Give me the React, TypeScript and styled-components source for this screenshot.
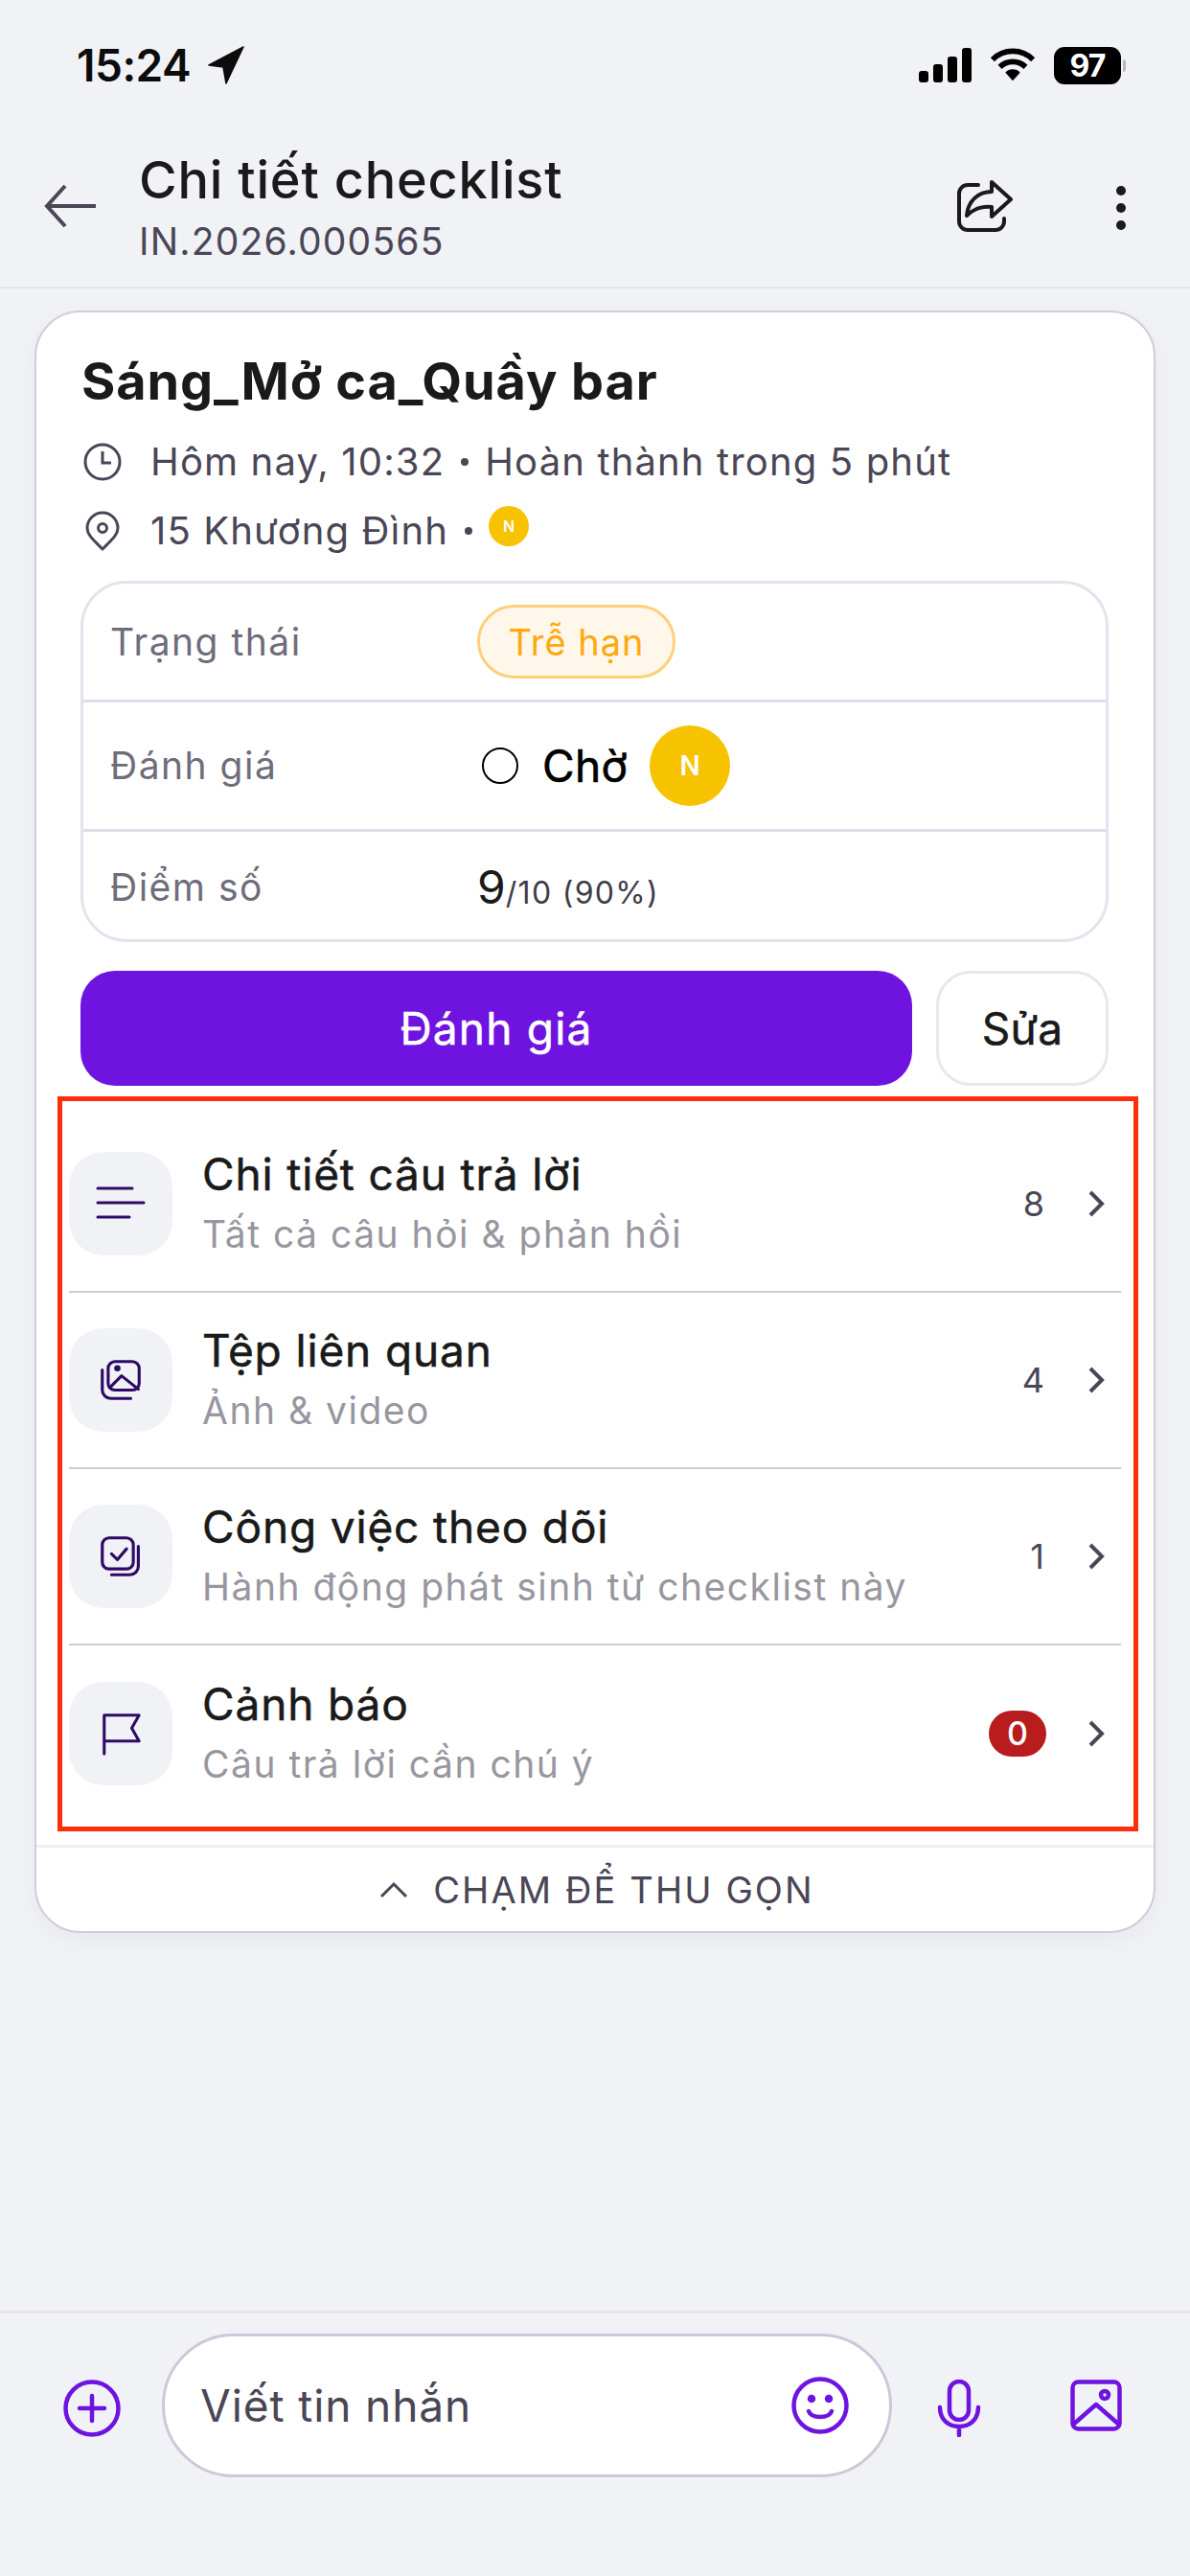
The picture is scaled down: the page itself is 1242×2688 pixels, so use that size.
import React from "react";
import styled, { createGlobalStyle } from "styled-components";

const Global = createGlobalStyle`
  html, body { margin: 0; padding: 0; background: #f1f2f6; }
  * { box-sizing: border-box; }
  body { font-family: Inter, "Noto Sans", sans-serif; -webkit-font-smoothing: antialiased; }
`;

const Page = styled.div`
  width: 1242px; height: 2688px; display: flex; flex-direction: column; background: #f1f2f6; overflow: hidden;
`;
const StatusBar = styled.div`
  height: 130px; flex: none; display: flex; justify-content: space-between; align-items: flex-start;
  padding: 46px 72px 0 80px;
`;
const StatusGroup = styled.div<{ $gap: number }>`
  display: flex; align-items: center; gap: ${p => p.$gap}px; height: 44px;
`;
const Time = styled.span`
  font: 600 46px/44px Inter, sans-serif; color: #0c0c0c; letter-spacing: -0.5px;
`;
const Battery = styled.div`
  width: 70px; height: 39px; border-radius: 11px; background: #000; color: #fff;
  font: 700 32px/39px Inter, sans-serif; text-align: center; position: relative; letter-spacing: -1px;
  &::after { content: ""; position: absolute; right: -5px; top: 13px; width: 3px; height: 13px; border-radius: 0 3px 3px 0; background: #b9b9b9; }
`;
const Header = styled.header`
  height: 171px; flex: none; display: flex; align-items: flex-start; padding: 0 66px 0 46px;
  border-bottom: 2px solid #e3e3ea;
`;
const BackBtn = styled.div`
  width: 99px; flex: none; padding-top: 62px;
`;
const HeaderText = styled.div`
  flex: 1; display: flex; flex-direction: column; padding-top: 25px;
`;
const HeaderTitle = styled.div`
  font: 500 54px/66px Inter, sans-serif; color: #1a1a1a; letter-spacing: 0.8px;
`;
const HeaderSub = styled.div`
  font: 400 39px/50px Inter, sans-serif; color: #4a4656; letter-spacing: 1.2px; margin-top: 6px;
`;
const HeaderActions = styled.div`
  display: flex; align-items: flex-start; gap: 107px; padding-top: 58px;
`;
const Card = styled.section`
  margin: 23px 36px 0; height: 1693px; flex: none; background: #fff; border: 2px solid #d3cadd; border-radius: 48px;
  box-shadow: 0 8px 24px rgba(30, 20, 60, 0.04); display: flex; flex-direction: column;
`;
const CardTop = styled.div`
  padding: 0 45px 0 48px; height: 817px; flex: none; display: flex; flex-direction: column;
`;
const CardTitle = styled.h1`
  margin: 38px 0 0 -1px; font: 700 54px/68px Inter, sans-serif; color: #1a1a1a; letter-spacing: 0.9px;
`;
const MetaList = styled.div`
  display: flex; flex-direction: column; margin-top: 14px;
`;
const Meta = styled.div`
  display: flex; align-items: center; height: 72px; font: 400 40px/52px Inter, sans-serif; color: #4a4656; letter-spacing: 1.15px;
`;
const MetaIcon = styled.span`
  width: 71px; display: flex; flex: none; padding-left: 1px;
`;
const Dot = styled.span`
  width: 8px; height: 8px; border-radius: 50%; background: #4a4656; margin: 0 17px; flex: none;
`;
const Avatar = styled.span<{ $size: number; $font: number; $lift?: number }>`
  width: ${p => p.$size}px; height: ${p => p.$size}px; border-radius: 50%; background: #f7c200; color: #fff; flex: none;
  display: flex; align-items: center; justify-content: center; font: 600 ${p => p.$font}px/1 Inter, sans-serif;
  margin-top: ${p => p.$lift ?? 0}px; letter-spacing: 0;
`;
const Table = styled.div`
  margin: 16px 2px 0 -2px; border: 3px solid #e5e2ed; border-radius: 48px; height: 377px; display: flex; flex-direction: column;
`;
const TableRow = styled.div<{ $h: number; $line?: boolean; $nudge?: number }>`
  height: ${p => p.$h}px; flex: none; display: flex; align-items: center; padding-left: 28px;
  padding-top: ${p => p.$nudge ?? 0}px;
  border-bottom: ${p => (p.$line ? "3px solid #e0dde9" : "none")};
`;
const RowLabel = styled.span`
  width: 383px; flex: none; font: 400 39px/50px Inter, sans-serif; color: #6f6c7b; letter-spacing: 1.5px;
`;
const Pill = styled.span`
  height: 77px; width: 207px; border: 3px solid #fdd07a; background: #fff7ea; border-radius: 39px; color: #ffa90f;
  display: flex; align-items: center; justify-content: center; font: 400 38px/1 Inter, sans-serif; letter-spacing: 1px;
`;
const Radio = styled.span`
  width: 38px; height: 38px; border-radius: 50%; border: 2.5px solid #000; margin-left: 5px; flex: none;
`;
const Cho = styled.span`
  font: 400 46px/1 Inter, sans-serif; color: #000; margin: 0 23px 0 25px; letter-spacing: 0.3px; -webkit-text-stroke: 0.6px #000;
`;
const Score = styled.span`
  font: 400 48px/1 Inter, sans-serif; color: #1a1a1a;
`;
const ScoreRest = styled.span`
  font: 400 32px/1 Inter, sans-serif; color: #3f3c49; letter-spacing: 1.3px;
`;
const Buttons = styled.div`
  display: flex; gap: 25px; margin: 30px 0 0 -2px;
`;
const Primary = styled.button`
  flex: none; width: 868px; height: 120px; border: 0; border-radius: 36px; background: #6f13e0; color: #fff;
  font: 400 46px/1 Inter, sans-serif; letter-spacing: 1.2px; -webkit-text-stroke: 0.5px #fff;
`;
const Secondary = styled.button`
  flex: none; width: 180px; height: 120px; border: 3px solid #e8e8ec; border-radius: 36px; background: #fff; color: #1a1a1a;
  font: 400 46px/1 Inter, sans-serif; letter-spacing: 0.3px; -webkit-text-stroke: 0.5px #1a1a1a;
`;
const List = styled.div`
  flex: none; margin: 1px 16px 0 22px; height: 767px; border: 5px solid #ff2d0a; padding: 16px 13px 0 7px;
`;
const Row = styled.div<{ $line?: boolean }>`
  height: 184px; display: flex; align-items: center; border-bottom: ${p => (p.$line ? "2px solid #cfc8db" : "none")};
  padding-right: 16px;
`;
const IconBox = styled.div`
  width: 108px; height: 108px; border-radius: 36px; background: #f1f2f6; flex: none; display: flex; align-items: center; justify-content: center;
`;
const RowText = styled.div`
  flex: 1; margin-left: 31px; display: flex; flex-direction: column; padding-bottom: 4px;
`;
const RowTitle = styled.div`
  font: 400 46px/58px Inter, sans-serif; color: #1a1a1a; letter-spacing: 0.85px; -webkit-text-stroke: 0.5px #1a1a1a;
`;
const RowSub = styled.div`
  font: 400 39px/50px Inter, sans-serif; color: #98969f; letter-spacing: 1.5px; margin-top: 9px;
`;
const Count = styled.span`
  font: 400 36px/1 Inter, sans-serif; color: #4a4656; margin-right: 46px;
`;
const Badge = styled.span`
  width: 60px; height: 48px; border-radius: 24px; background: #b81c1c; color: #fff; margin-right: 44px;
  display: flex; align-items: center; justify-content: center; font: 500 34px/1 Inter, sans-serif;
`;
const Collapse = styled.div`
  margin-top: 14px; flex: 1; border-top: 3px solid #f0eff4; display: flex; align-items: center; justify-content: center; gap: 26px;
  padding-left: 4px; font: 400 38px/1 Inter, sans-serif; color: #4a4656; letter-spacing: 2.1px;
`;
const Spacer = styled.div`flex: 1;`;
const Composer = styled.footer`
  height: 277px; flex: none; border-top: 3px solid #e6e3ec; padding: 21px 40px 0 66px; display: flex; align-items: flex-start;
`;
const PlusSlot = styled.div`
  width: 103px; flex: none; padding-top: 48px; display: flex;
`;
const InputBox = styled.div`
  width: 762px; height: 150px; flex: none; border: 3px solid #d0c6da; border-radius: 75px; background: #fff;
  display: flex; align-items: center; justify-content: space-between; padding: 0 42px 0 37px;
  font: 400 46px/1 Inter, sans-serif; color: #4a4656; letter-spacing: 0.9px;
`;
const ComposerActions = styled.div`
  display: flex; align-items: flex-start; padding: 48px 0 0 47px; gap: 93px;
`;

const Stroke = ({ size, vb, color, sw, children }: { size: number; vb: string; color: string; sw: number; children: React.ReactNode }) => (
  <svg width={size} height={size} viewBox={vb} fill="none" stroke={color} strokeWidth={sw} strokeLinecap="round" strokeLinejoin="round">{children}</svg>
);

const DARK = "#2e0a66";
const PURPLE = "#6f13e0";

const Chevron = () => (
  <svg width="18" height="28" viewBox="0 0 18 28" fill="none" stroke="#4a4656" strokeWidth="4"><path d="M2 2l12 12L2 26" /></svg>
);

const rows = [
  { title: "Chi tiết câu trả lời", sub: "Tất cả câu hỏi & phản hồi", count: "8", icon: (
    <Stroke size={56} vb="0 0 56 56" color={DARK} sw={3}><path d="M4 12h36M4 27h48M4 42h33" /></Stroke>
  ) },
  { title: "Tệp liên quan", sub: "Ảnh & video", count: "4", icon: (
    <Stroke size={42} vb="0 0 48 48" color={DARK} sw={3.6}>
      <rect x="9" y="2" width="37" height="34" rx="8" />
      <path d="M2 12v24a10 10 0 0 0 10 10h24" />
      <path d="M11 33l14-14 20 16" /><circle cx="20" cy="10" r="2" fill={DARK} />
    </Stroke>
  ) },
  { title: "Công việc theo dõi", sub: "Hành động phát sinh từ checklist này", count: "1", icon: (
    <Stroke size={42} vb="0 0 48 48" color={DARK} sw={3.6}>
      <rect x="2" y="2" width="37" height="37" rx="8" />
      <path d="M45 12v24a10 10 0 0 1-10 10H13" />
      <path d="M13 21l7 7 11-13" />
    </Stroke>
  ) },
  { title: "Cảnh báo", sub: "Câu trả lời cần chú ý", icon: (
    <Stroke size={46} vb="0 0 48 48" color={DARK} sw={3.2}>
      <path d="M6 46V4h38l-8 14 8 14H6" />
    </Stroke>
  ) },
];

export default function App() {
  return (
    <Page>
      <Global />
      <StatusBar>
        <StatusGroup $gap={18}>
          <Time>15:24</Time>
          <svg width="38" height="40" viewBox="0 0 38 40"><path d="M37 1L1 20l15 2 3 17z" fill="#0c0c0c" stroke="#0c0c0c" strokeWidth="1.5" strokeLinejoin="round" /></svg>
        </StatusGroup>
        <StatusGroup $gap={19}>
          <svg width="55" height="36" viewBox="0 0 55 36" fill="#000">
            <rect x="0" y="24" width="10" height="12" rx="3" /><rect x="15" y="17" width="10" height="19" rx="3" />
            <rect x="30" y="9" width="10" height="27" rx="3" /><rect x="45" y="0" width="10" height="36" rx="3" />
          </svg>
          <svg width="48" height="36" viewBox="0 0 50 36" fill="none" stroke="#000" strokeWidth="6">
            <path d="M3 12a31 31 0 0 1 44 0M11 20a20 20 0 0 1 28 0" /><path d="M25 35l-8-9a11 11 0 0 1 16 0z" fill="#000" stroke="none" />
          </svg>
          <Battery>97</Battery>
        </StatusGroup>
      </StatusBar>
      <Header>
        <BackBtn>
          <svg width="56" height="46" viewBox="0 0 56 46" fill="none" stroke="#4a4656" strokeWidth="4"><path d="M54 23H4M22 2L3 23l19 21" /></svg>
        </BackBtn>
        <HeaderText>
          <HeaderTitle>Chi tiết checklist</HeaderTitle>
          <HeaderSub>IN.2026.000565</HeaderSub>
        </HeaderText>
        <HeaderActions>
          <svg width="58" height="54" viewBox="0 0 58 54" fill="none" stroke="#1a1a1a" strokeWidth="4" strokeLinejoin="round" strokeLinecap="round">
            <path d="M22 5H11a9 9 0 0 0-9 9v29a9 9 0 0 0 9 9h29a9 9 0 0 0 9-9v-3" />
            <path d="M36 2l20 18-20 18v-10C25 27 17 30 10 37c1-15 12-25 26-25z" />
          </svg>
          <svg width="12" height="58" viewBox="0 0 12 58" fill="#1a1a1a"><circle cx="6" cy="11" r="5" /><circle cx="6" cy="29" r="5" /><circle cx="6" cy="47" r="5" /></svg>
        </HeaderActions>
      </Header>
      <Card>
        <CardTop>
          <CardTitle>Sáng_Mở ca_Quầy bar</CardTitle>
          <MetaList>
            <Meta>
              <MetaIcon><svg width="40" height="40" viewBox="0 0 40 40" fill="none" stroke="#4a4656" strokeWidth="3"><circle cx="20" cy="20" r="18" /><path d="M20 9v12h9" /></svg></MetaIcon>
              Hôm nay, 10:32<Dot />Hoàn thành trong 5 phút
            </Meta>
            <Meta>
              <MetaIcon><svg width="40" height="42" viewBox="0 0 40 42" fill="none" stroke="#4a4656" strokeWidth="3" strokeLinejoin="round"><path d="M20 40C10 30 4 25 4 18a16 16 0 0 1 32 0c0 7-6 12-16 22z" /><circle cx="20" cy="18" r="4.5" /></svg></MetaIcon>
              15 Khương Đình<Dot /><Avatar $size={42} $font={16} $lift={-10}>N</Avatar>
            </Meta>
          </MetaList>
          <Table>
            <TableRow $h={124} $line>
              <RowLabel>Trạng thái</RowLabel>
              <Pill>Trễ hạn</Pill>
            </TableRow>
            <TableRow $h={135} $line>
              <RowLabel>Đánh giá</RowLabel>
              <Radio />
              <Cho>Chờ</Cho>
              <Avatar $size={84} $font={28}>N</Avatar>
            </TableRow>
            <TableRow $h={112} $nudge={3}>
              <RowLabel>Điểm số</RowLabel>
              <span><Score>9</Score><ScoreRest>/10 (90%)</ScoreRest></span>
            </TableRow>
          </Table>
          <Buttons>
            <Primary>Đánh giá</Primary>
            <Secondary>Sửa</Secondary>
          </Buttons>
        </CardTop>
        <List>
          {rows.map((r, i) => (
            <Row key={r.title} $line={i < 3}>
              <IconBox>{r.icon}</IconBox>
              <RowText>
                <RowTitle>{r.title}</RowTitle>
                <RowSub>{r.sub}</RowSub>
              </RowText>
              {r.count ? <Count>{r.count}</Count> : <Badge>0</Badge>}
              <Chevron />
            </Row>
          ))}
        </List>
        <Collapse>
          <svg width="30" height="18" viewBox="0 0 30 18" fill="none" stroke="#4a4656" strokeWidth="3"><path d="M2 16L15 3l13 13" /></svg>
          CHẠM ĐỂ THU GỌN
        </Collapse>
      </Card>
      <Spacer />
      <Composer>
        <PlusSlot>
          <svg width="60" height="60" viewBox="0 0 60 60" fill="none" stroke={PURPLE} strokeWidth="4.5" strokeLinecap="round"><circle cx="30" cy="30" r="27.5" /><path d="M30 17v26M17 30h26" /></svg>
        </PlusSlot>
        <InputBox>
          Viết tin nhắn
          <svg width="60" height="60" viewBox="0 0 60 60" fill="none" stroke={PURPLE} strokeWidth="4.5" strokeLinecap="round"><circle cx="30" cy="30" r="27.5" /><path d="M18 36c3 8 21 8 24 0" /><circle cx="21" cy="23" r="2" fill={PURPLE} /><circle cx="39" cy="23" r="2" fill={PURPLE} /></svg>
        </InputBox>
        <ComposerActions>
          <svg width="46" height="60" viewBox="0 0 46 60" fill="none" stroke={PURPLE} strokeWidth="4.5" strokeLinecap="round"><rect x="13" y="2" width="20" height="40" rx="10" /><path d="M3 29c0 13 9 20 20 20s20-7 20-20M23 49v9" /></svg>
          <svg width="54" height="54" viewBox="0 0 54 54" fill="none" stroke={PURPLE} strokeWidth="4.5" strokeLinejoin="round"><rect x="2.5" y="2.5" width="49" height="49" rx="6" /><circle cx="36" cy="16" r="4" /><path d="M3 47l24-21 24 21" /></svg>
        </ComposerActions>
      </Composer>
    </Page>
  );
}
